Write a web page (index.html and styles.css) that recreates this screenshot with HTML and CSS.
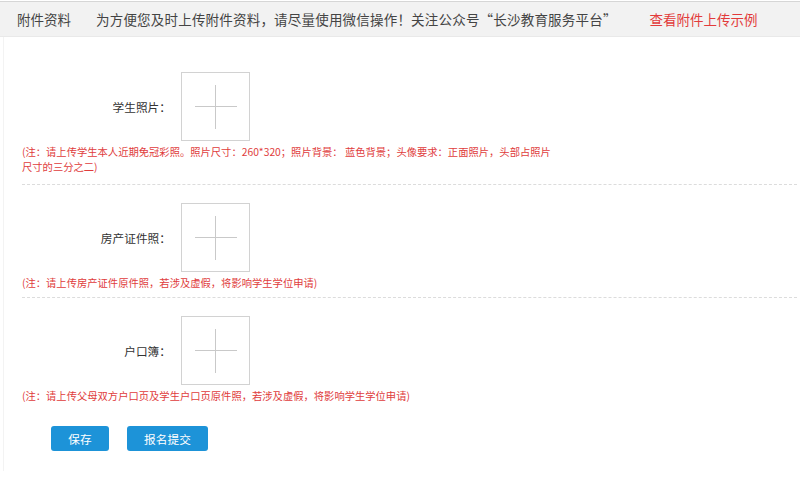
FILE: index.html
```html
<!DOCTYPE html>
<html lang="zh-CN">
<head>
  <meta charset="UTF-8" />
  <meta name="viewport" content="width=device-width, initial-scale=1.0" />
  <title>附件资料</title>
  <link rel="stylesheet" href="styles.css">
</head>
<body>
  <div class="top-bar">
    <span class="top-title">附件资料</span>
    <span class="top-tip">为方便您及时上传附件资料，请尽量使用微信操作！关注公众号“长沙教育服务平台”</span>
    <a class="top-link" href="#">查看附件上传示例</a>
  </div>

  <main class="form">
    <div class="upload-item">
      <div class="upload-row">
        <label class="upload-label">学生照片：</label>
        <div class="upload-box">
          <svg width="42" height="44" viewBox="0 0 42 44"><path d="M0 21.5H42M20.5 0V44" stroke="#c9c9c9" stroke-width="1" fill="none"/></svg>
        </div>
      </div>
      <p class="note">(注：请上传学生本人近期免冠彩照。照片尺寸：260*320；照片背景： 蓝色背景；头像要求：正面照片，头部占照片尺寸的三分之二)</p>
    </div>

    <div class="upload-item">
      <div class="upload-row">
        <label class="upload-label">房产证件照：</label>
        <div class="upload-box">
          <svg width="42" height="44" viewBox="0 0 42 44"><path d="M0 21.5H42M20.5 0V44" stroke="#c9c9c9" stroke-width="1" fill="none"/></svg>
        </div>
      </div>
      <p class="note">(注：请上传房产证件原件照，若涉及虚假，将影响学生学位申请)</p>
    </div>

    <div class="upload-item upload-item-last">
      <div class="upload-row">
        <label class="upload-label">户口簿：</label>
        <div class="upload-box">
          <svg width="42" height="44" viewBox="0 0 42 44"><path d="M0 21.5H42M20.5 0V44" stroke="#c9c9c9" stroke-width="1" fill="none"/></svg>
        </div>
      </div>
      <p class="note">(注：请上传父母双方户口页及学生户口页原件照，若涉及虚假，将影响学生学位申请)</p>
    </div>

    <div class="actions">
      <button class="btn btn-save">保存</button>
      <button class="btn btn-submit">报名提交</button>
    </div>
  </main>
</body>
</html>
```

FILE: styles.css
```css
body {
  margin: 0;
  padding: 0;
  background: #fff;
  color: #333;
  font-family: "Microsoft YaHei", "Noto Sans CJK SC", "Noto Sans", sans-serif;
}
.top-bar {
  margin-top: 1px;
  height: 34px;
  display: flex;
  align-items: center;
  padding-left: 17px;
  background-color: #f2f2f2;
  border-top: 1px solid #d6d6d6;
  border-bottom: 1px solid #e9e9e9;
  font-size: 13.5px;
  color: #444;
  white-space: nowrap;
}
.top-title {
  margin-right: 25px;
}
.top-tip {
  letter-spacing: 0.2px;
}
.top-link {
  margin-left: 33px;
  color: #e23b3b;
  text-decoration: none;
}
.form {
  padding: 17px 3px 20px 18px;
  border-left: 1px solid #f3f3f3;
  margin-left: 3px;
}
.upload-item {
  padding: 18px 0 7px 0;
  border-bottom: 1px dashed #dcdcdc;
}
.upload-item:first-child {
  padding-bottom: 10px;
}
.upload-item-last {
  padding-bottom: 0;
  border-bottom: none;
}
.upload-row {
  display: flex;
  align-items: center;
}
.upload-label {
  width: 149px;
  text-align: right;
  font-size: 11.7px;
  color: #333;
  margin-right: 10px;
}
.upload-box {
  width: 69px;
  height: 69px;
  box-sizing: border-box;
  border: 1px solid #d2d2d2;
  display: flex;
  align-items: center;
  justify-content: center;
}
.note {
  margin: 3px 0 0 0;
  max-width: 535px;
  font-size: 10.3px;
  line-height: 15px;
  color: #e03c3c;
}
.actions {
  display: flex;
  gap: 18px;
  padding: 23px 0 0 29px;
}
.btn {
  height: 25px;
  border: none;
  border-radius: 3px;
  background-color: #1d93d8;
  color: #fff;
  font-family: inherit;
  font-size: 11.7px;
  cursor: pointer;
}
.btn-save {
  width: 58px;
}
.btn-submit {
  width: 81px;
}
.btn:hover {
  background-color: #1783c4;
}
```
